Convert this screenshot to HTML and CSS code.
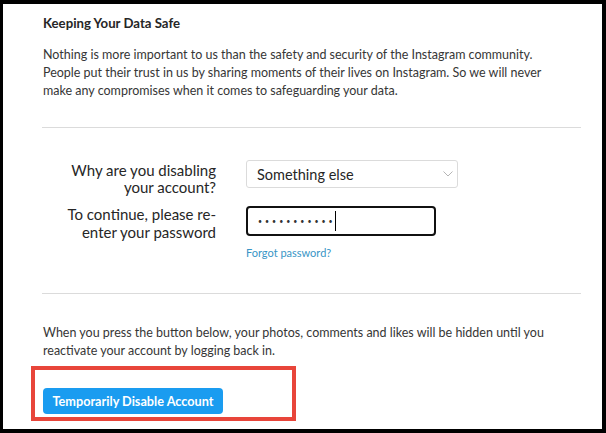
FILE: index.html
```html
<!DOCTYPE html>
<html lang="en">
<head>
<meta charset="utf-8">
<title>Temporarily Disable Account</title>
<link rel="stylesheet" href="styles.css">
</head>
<body>
<main class="panel">
  <h2 class="title">Keeping Your Data Safe</h2>
  <p class="text text-intro">Nothing is more important to us than the safety and security of the Instagram community. People put their trust in us by sharing moments of their lives on Instagram. So we will never make any compromises when it comes to safeguarding your data.</p>
  <hr class="divider">
  <div class="form">
    <div class="row row-reason">
      <label class="label">Why are you disabling<br>your account?</label>
      <div class="field">
        <div class="select">
          <span>Something else</span>
          <svg class="chevron" width="10" height="6" viewBox="0 0 10 6"><path d="M0.5 0.5 L5 5 L9.5 0.5" fill="none" stroke="#b5b5b5" stroke-width="1"/></svg>
        </div>
      </div>
    </div>
    <div class="row row-password">
      <label class="label">To continue, please re-<br>enter your password</label>
      <div class="field">
        <div class="password"><span class="dots">•••••••••••</span><span class="caret"></span></div>
        <a class="forgot" href="#">Forgot password?</a>
      </div>
    </div>
  </div>
  <hr class="divider divider-second">
  <p class="text text-outro">When you press the button below, your photos, comments and likes will be hidden until you reactivate your account by logging back in.</p>
  <div class="highlight">
    <button class="btn" type="button">Temporarily Disable Account</button>
  </div>
</main>
</body>
</html>
```

FILE: styles.css
```css
* { box-sizing: border-box; }
html, body { height: 100%; }
body {
  margin: 0;
  background: #000;
  padding: 4px 4px 4px 3px;
  font-family: Lato, "Noto Sans", sans-serif;
  color: #262626;
}
.panel {
  background: #fff;
  height: 100%;
  padding: 10px 21px 0 40px;
  display: flex;
  flex-direction: column;
  align-items: stretch;
}
.title {
  margin: 0;
  font-size: 13.2px;
  line-height: 18px;
  font-weight: 700;
  color: #262626;
}
.text {
  margin: 0;
  max-width: 520px;
  font-size: 12.5px;
  line-height: 18px;
  color: #363636;
}
.text-intro { margin-top: 14px; }
.divider {
  margin: 27px 0 0 -1px;
  border: 0;
  height: 1px;
  background: #dbdbdb;
}
.form {
  margin-top: 32px;
  display: flex;
  flex-direction: column;
  gap: 10px;
}
.row {
  display: grid;
  grid-template-columns: 173px 212px;
  column-gap: 30px;
  align-items: start;
}
.label {
  text-align: right;
  font-size: 15px;
  font-weight: 400;
  line-height: 17px;
  color: #262626;
}
.row-reason .label { padding-top: 2px; }
.row-password .label { margin-top: -1px; line-height: 18px; }
.select {
  height: 28px;
  border: 1px solid #dbdbdb;
  border-radius: 3px;
  display: flex;
  align-items: center;
  justify-content: space-between;
  padding: 0 4px 0 10px;
  font-size: 14.5px;
  color: #262626;
}
.chevron { flex: none; }
.password {
  width: 190px;
  height: 30px;
  border: 2px solid #111;
  border-radius: 4px;
  display: flex;
  align-items: center;
  padding-left: 10px;
}
.dots {
  font-size: 7px;
  letter-spacing: 3px;
  margin-right: -2px;
  color: #333;
}
.caret {
  width: 1px;
  height: 20px;
  background: #000;
  margin-left: 1px;
}
.forgot {
  display: block;
  margin-top: 10px;
  font-size: 11px;
  line-height: 14px;
  font-weight: 400;
  color: #3895c6;
  text-decoration: none;
}
.divider-second { margin-top: 33px; }
.text-outro { margin-top: 30px; }
.highlight {
  align-self: flex-start;
  margin: 6px 0 0 -12px;
  border: 4px solid #e8453a;
  padding: 18px 69px 3px 8px;
}
.btn {
  display: block;
  width: 180px;
  height: 26px;
  border: 0;
  border-radius: 4px;
  background: #1a9cf0;
  color: #fff;
  font-family: Lato, "Noto Sans", sans-serif;
  font-size: 12.7px;
  font-weight: 700;
  padding: 0;
}
```
